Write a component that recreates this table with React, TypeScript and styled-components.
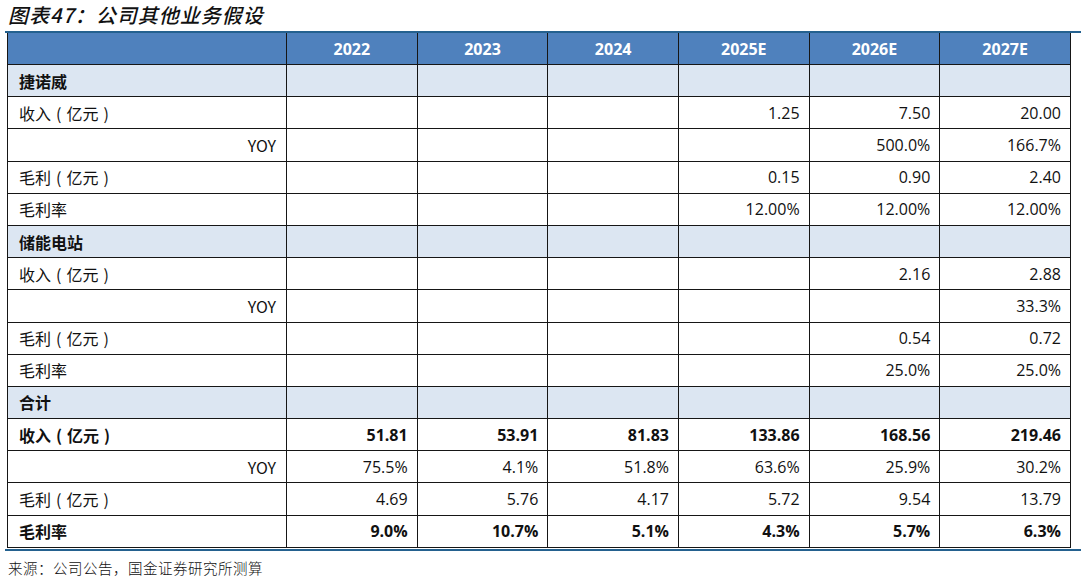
import styled, { createGlobalStyle } from 'styled-components';

const GlobalStyle = createGlobalStyle`
  body {
    margin: 0;
    background: #fff;
    font-family: 'Open Sans', 'Noto Sans CJK SC', sans-serif;
    color: #111;
  }
`;

const Page = styled.div`
  width: 1086px;
  height: 578px;
  padding: 0 0 0 5px;
  box-sizing: border-box;
`;

const Title = styled.h1`
  margin: 0;
  height: 31px;
  padding-left: 3px;
  font-family: 'Noto Sans CJK SC', sans-serif;
  font-size: 20px;
  font-weight: 500;
  font-style: italic;
  line-height: 29px;
  letter-spacing: 1px;
  color: #111;
`;

const Frame = styled.div`
  width: 1076px;
  border-top: 2px solid #24618f;
  border-bottom: 2px solid #24618f;
  padding-bottom: 1px;
`;

const Table = styled.table`
  margin-left: 2px;
  width: 1064px;
  border-collapse: collapse;
  table-layout: fixed;
  font-size: 16px;
`;

const HeadCell = styled.th`
  height: 31px;
  padding: 0;
  background: #4f81bd;
  color: #fff;
  font-weight: 700;
  text-align: center;
  border: 1.5px solid #161616;
  border-top: none;
`;

const Row = styled.tr<{ $section?: boolean }>`
  height: 32.2px;
  background: ${(p) => (p.$section ? '#dce6f2' : '#fff')};
`;

const LabelCell = styled.td<{ $bold?: boolean; $right?: boolean }>`
  padding: 0 ${(p) => (p.$right ? '10px' : '0')} 0 ${(p) => (p.$right ? '0' : '11px')};
  text-align: ${(p) => (p.$right ? 'right' : 'left')};
  font-family: 'Noto Sans CJK SC', sans-serif;
  font-weight: ${(p) => (p.$bold ? 700 : 400)};
  border: 1.5px solid #161616;
  white-space: nowrap;
`;

const Paren = styled.span`
  margin: 0 5px;
`;

const ValueCell = styled.td<{ $bold?: boolean }>`
  padding: 0 9px 0 0;
  text-align: right;
  font-weight: ${(p) => (p.$bold ? 700 : 400)};
  border: 1.5px solid #161616;
`;

const Source = styled.p`
  margin: 6px 0 0 3px;
  font-family: 'Noto Sans CJK SC', sans-serif;
  font-size: 14.5px;
  font-weight: 300;
  letter-spacing: 0.5px;
  color: #111;
`;

type Line = {
  label: string;
  unit?: boolean;
  values?: string[];
  section?: boolean;
  bold?: boolean;
  right?: boolean;
};

const years = ['2022', '2023', '2024', '2025E', '2026E', '2027E'];

const rows: Line[] = [
  { label: '捷诺威', section: true, bold: true },
  { label: '收入', unit: true, values: ['', '', '', '1.25', '7.50', '20.00'] },
  { label: 'YOY', right: true, values: ['', '', '', '', '500.0%', '166.7%'] },
  { label: '毛利', unit: true, values: ['', '', '', '0.15', '0.90', '2.40'] },
  { label: '毛利率', values: ['', '', '', '12.00%', '12.00%', '12.00%'] },
  { label: '储能电站', section: true, bold: true },
  { label: '收入', unit: true, values: ['', '', '', '', '2.16', '2.88'] },
  { label: 'YOY', right: true, values: ['', '', '', '', '', '33.3%'] },
  { label: '毛利', unit: true, values: ['', '', '', '', '0.54', '0.72'] },
  { label: '毛利率', values: ['', '', '', '', '25.0%', '25.0%'] },
  { label: '合计', section: true, bold: true },
  { label: '收入', unit: true, bold: true, values: ['51.81', '53.91', '81.83', '133.86', '168.56', '219.46'] },
  { label: 'YOY', right: true, values: ['75.5%', '4.1%', '51.8%', '63.6%', '25.9%', '30.2%'] },
  { label: '毛利', unit: true, values: ['4.69', '5.76', '4.17', '5.72', '9.54', '13.79'] },
  { label: '毛利率', bold: true, values: ['9.0%', '10.7%', '5.1%', '4.3%', '5.7%', '6.3%'] },
];

export default function App() {
  return (
    <Page>
      <GlobalStyle />
      <Title>图表47：公司其他业务假设</Title>
      <Frame>
        <Table>
          <colgroup>
            <col style={{ width: 279 }} />
            {years.map((y) => (
              <col key={y} />
            ))}
          </colgroup>
          <thead>
            <tr>
              <HeadCell />
              {years.map((y) => (
                <HeadCell key={y}>{y}</HeadCell>
              ))}
            </tr>
          </thead>
          <tbody>
            {rows.map((r, i) => (
              <Row key={i} $section={r.section}>
                <LabelCell $bold={r.bold} $right={r.right}>
                  {r.label}
                  {r.unit && (
                    <>
                      <Paren>(</Paren>亿元<Paren>)</Paren>
                    </>
                  )}
                </LabelCell>
                {(r.values ?? ['', '', '', '', '', '']).map((v, j) => (
                  <ValueCell key={j} $bold={r.bold}>
                    {v}
                  </ValueCell>
                ))}
              </Row>
            ))}
          </tbody>
        </Table>
      </Frame>
      <Source>来源：公司公告，国金证券研究所测算</Source>
    </Page>
  );
}
